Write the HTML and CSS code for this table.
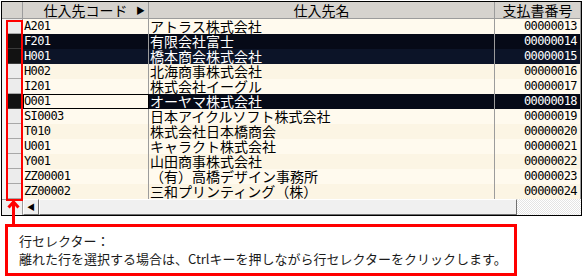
FILE: index.html
```html
<!DOCTYPE html>
<html lang="ja">
<head>
  <meta charset="UTF-8">
  <title>仕入先一覧 - 行セレクター</title>
  <link rel="stylesheet" href="styles.css">
</head>
<body>

  <div class="page">
    <!-- 仕入先グリッド -->
    <div class="grid">
      <div class="row head">
        <div class="cell sel"></div>
        <div class="cell code">仕入先コード<span class="sort">&#9654;</span></div>
        <div class="cell name">仕入先名</div>
        <div class="cell num">支払書番号</div>
      </div>

      <div class="row">
        <div class="cell sel"><span class="box"></span></div>
        <div class="cell code">A201</div>
        <div class="cell name">アトラス株式会社</div>
        <div class="cell num">00000013</div>
      </div>
      <div class="row picked">
        <div class="cell sel"><span class="box"></span></div>
        <div class="cell code">F201</div>
        <div class="cell name">有限会社富士</div>
        <div class="cell num">00000014</div>
      </div>
      <div class="row picked">
        <div class="cell sel"><span class="box"></span></div>
        <div class="cell code">H001</div>
        <div class="cell name">橋本商会株式会社</div>
        <div class="cell num">00000015</div>
      </div>
      <div class="row">
        <div class="cell sel"><span class="box"></span></div>
        <div class="cell code">H002</div>
        <div class="cell name">北海商事株式会社</div>
        <div class="cell num">00000016</div>
      </div>
      <div class="row">
        <div class="cell sel"><span class="box"></span></div>
        <div class="cell code">I201</div>
        <div class="cell name">株式会社イーグル</div>
        <div class="cell num">00000017</div>
      </div>
      <div class="row picked">
        <div class="cell sel"><span class="box"></span></div>
        <div class="cell code current">O001</div>
        <div class="cell name">オーヤマ株式会社</div>
        <div class="cell num">00000018</div>
      </div>
      <div class="row">
        <div class="cell sel"><span class="box"></span></div>
        <div class="cell code">SI0003</div>
        <div class="cell name">日本アイクルソフト株式会社</div>
        <div class="cell num">00000019</div>
      </div>
      <div class="row">
        <div class="cell sel"><span class="box"></span></div>
        <div class="cell code">T010</div>
        <div class="cell name">株式会社日本橋商会</div>
        <div class="cell num">00000020</div>
      </div>
      <div class="row">
        <div class="cell sel"><span class="box"></span></div>
        <div class="cell code">U001</div>
        <div class="cell name">キャラクト株式会社</div>
        <div class="cell num">00000021</div>
      </div>
      <div class="row">
        <div class="cell sel"><span class="box"></span></div>
        <div class="cell code">Y001</div>
        <div class="cell name">山田商事株式会社</div>
        <div class="cell num">00000022</div>
      </div>
      <div class="row">
        <div class="cell sel"><span class="box"></span></div>
        <div class="cell code">ZZ00001</div>
        <div class="cell name">（有）高橋デザイン事務所</div>
        <div class="cell num">00000023</div>
      </div>
      <div class="row">
        <div class="cell sel"><span class="box"></span></div>
        <div class="cell code">ZZ00002</div>
        <div class="cell name">三和プリンティング（株）</div>
        <div class="cell num">00000024</div>
      </div>

      <!-- 横スクロールバー -->
      <div class="hscroll">
        <div class="corner"></div>
        <div class="btn">&#9664;</div>
        <div class="thumb"></div>
        <div class="track"></div>
      </div>
    </div>

    <!-- 行セレクターの囲みと矢印 -->
    <div class="sel-mark"></div>
    <svg class="arrow" width="14" height="28" viewBox="0 0 14 28">
      <line x1="6.5" y1="3" x2="6.5" y2="28" stroke="#f00" stroke-width="3"/>
      <polyline points="1.5,8.5 6.5,3 11.5,8.5" fill="none" stroke="#f00" stroke-width="3"/>
    </svg>

    <div class="callout">
      <p>行セレクター：</p>
      <p>離れた行を選択する場合は、Ctrlキーを押しながら行セレクターをクリックします。</p>
    </div>
  </div>

</body>
</html>
```

FILE: styles.css
```css
body {
  margin: 0;
  background: #fff;
  font-family: "Noto Sans CJK JP", sans-serif;
}
.page {
  position: relative;
  width: 583px;
  height: 277px;
}
.grid {
  margin: 1px 1px 0 1px;
  border: 1px solid #000;
  background: #fff;
}
.row {
  display: grid;
  grid-template-columns: 21px 126px 346px 1fr;
  height: 15px;
  background: #fffaee;
}
.row:nth-child(odd) {
  background: #fcf5e4;
}
.cell {
  box-sizing: border-box;
  border-right: 1px solid #9c9c9c;
  font-size: 14px;
  line-height: 15px;
  white-space: nowrap;
  color: #000;
}
.cell.code,
.cell.num {
  font-family: "DejaVu Sans Mono", monospace;
  font-size: 12px;
  letter-spacing: -0.6px;
  padding-left: 1px;
}
.cell.num {
  text-align: right;
  padding-right: 3px;
}
.cell.name {
  padding-left: 1px;
}
.cell.sel {
  background: #f6f6f6;
  padding-left: 4px;
}
.cell.sel .box {
  display: block;
  height: 15px;
  box-sizing: border-box;
  background: #ececec;
  border-bottom: 1px solid #a8a8a8;
}

/* 選択行 */
.row.picked {
  background: #0c1428;
}
.row.picked:nth-child(odd) {
  background: #060a17;
}
.row.picked .cell {
  color: #fff;
}
.row.picked .sel .box {
  background: #121212;
  border-bottom-color: #3a3a3a;
}
.row.picked .cell.current {
  background: #fffaee;
  color: #000;
  border: 1px solid #000;
  line-height: 13px;
  padding-left: 0;
}

/* 見出し行 */
.row.head {
  height: 17px;
  background: #d6d3ce;
  border-bottom: 1px solid #9c9c9c;
  box-sizing: border-box;
}
.row.head .cell {
  position: relative;
  font-family: "Noto Sans CJK JP", sans-serif;
  font-size: 14px;
  letter-spacing: 0;
  line-height: 16px;
  text-align: center;
  padding: 0;
}
.row.head .cell.sel {
  background: #d6d3ce;
}
.sort {
  position: absolute;
  right: 3px;
  top: 1px;
  font-size: 9px;
}

/* 横スクロールバー */
.hscroll {
  display: flex;
  height: 16px;
}
.hscroll .corner {
  width: 21px;
  box-sizing: border-box;
  background: #f0f0f0;
  border-right: 1px solid #9c9c9c;
  border-top: 1px solid #9c9c9c;
}
.hscroll .btn {
  width: 16px;
  box-sizing: border-box;
  background: #f0f0f0;
  border: 1px solid;
  border-color: #fff #707070 #707070 #fff;
  font-size: 8px;
  line-height: 14px;
  text-align: center;
  color: #000;
}
.hscroll .thumb {
  width: 478px;
  box-sizing: border-box;
  background: #f0f0f0;
  border: 1px solid;
  border-color: #fff #707070 #707070 #fff;
}
.hscroll .track {
  flex: 1;
  background: repeating-conic-gradient(#fff 0 25%, #e4e4e4 0 50%) 0 0 / 2px 2px;
}

/* 囲みと吹き出し */
.sel-mark {
  position: absolute;
  left: 6px;
  top: 19px;
  width: 17px;
  height: 181px;
  box-sizing: border-box;
  border: 2px solid #f00;
}
.arrow {
  position: absolute;
  left: 7px;
  top: 198px;
}
.callout {
  box-sizing: border-box;
  margin: 8px 0 0 5px;
  width: 512px;
  height: 52px;
  border: 3px solid #f00;
  padding: 5px 0 0 11px;
  font-size: 13px;
  line-height: 18px;
  color: #1c1c1c;
}
.callout p {
  margin: 0;
}
```
